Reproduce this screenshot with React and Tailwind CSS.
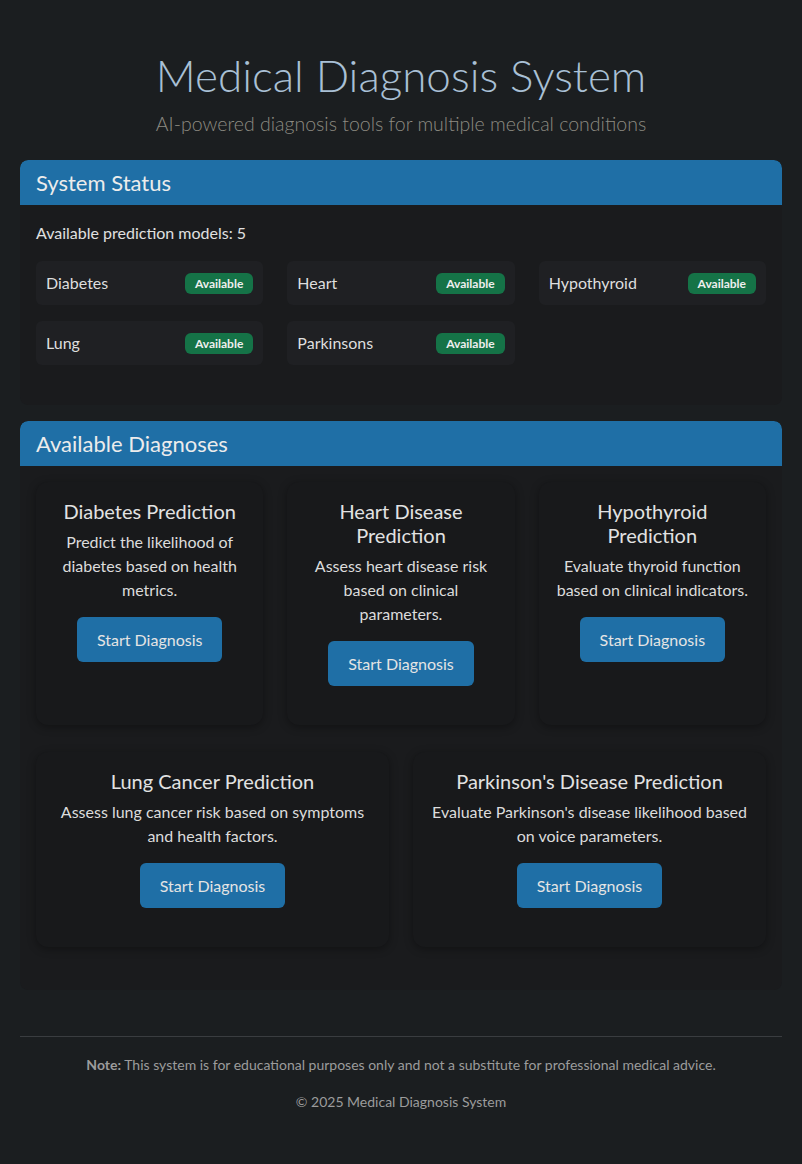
import React from "react";

const models = ["Diabetes", "Heart", "Hypothyroid", "Lung", "Parkinsons"];

const topRow = [
  {
    title: "Diabetes Prediction",
    text: "Predict the likelihood of diabetes based on health metrics.",
  },
  {
    title: "Heart Disease Prediction",
    text: "Assess heart disease risk based on clinical parameters.",
  },
  {
    title: "Hypothyroid Prediction",
    text: "Evaluate thyroid function based on clinical indicators.",
  },
];

const bottomRow = [
  {
    title: "Lung Cancer Prediction",
    text: "Assess lung cancer risk based on symptoms and health factors.",
  },
  {
    title: "Parkinson's Disease Prediction",
    text: "Evaluate Parkinson's disease likelihood based on voice parameters.",
  },
];

const font = { fontFamily: "Lato, 'Noto Sans', sans-serif" };

const DiagnosisCard = ({ title, text }) => (
  <div className="flex flex-col items-center rounded-xl bg-[#18191b] px-4 pt-[17px] pb-[39px] text-center shadow-[0_2px_8px_rgba(0,0,0,0.35)]">
    <h5 className="text-[20px] leading-6 text-[#e2e2e2]">{title}</h5>
    <p className="mt-[7px] text-[16px] leading-6 text-[#dcdcdc]">{text}</p>
    <button className="mt-[15px] rounded-md bg-[#1f6fa6] px-5 py-[10px] text-[16px] leading-[25px] text-[#e4e4e4]">
      Start Diagnosis
    </button>
  </div>
);

const CardHeader = ({ children }) => (
  <div className="flex h-[45px] items-center rounded-t-lg bg-[#1f6fa6] px-4">
    <h4 className="text-[22px] text-[#ececec]">{children}</h4>
  </div>
);

export default function App() {
  return (
    <div className="min-h-[1164px] bg-[#1b1e20] px-5 pt-12 pb-10" style={font}>
      <header className="text-center">
        <h1 className="text-[44px] leading-[54px] font-light text-[#a9c0d5]">Medical Diagnosis System</h1>
        <p className="mt-[7px] text-[19.5px] leading-[30px] font-light text-[#8d8b82]">
          AI-powered diagnosis tools for multiple medical conditions
        </p>
      </header>

      <section className="mt-[21px] overflow-hidden rounded-lg bg-[#1a1b1d]">
        <CardHeader>System Status</CardHeader>
        <div className="px-4 pt-4 pb-10">
          <p className="text-[16px] leading-6 text-[#e0e0e0]">Available prediction models: 5</p>
          <div className="mt-4 grid grid-cols-3 gap-x-6 gap-y-4">
            {models.map((m) => (
              <div key={m} className="flex h-11 items-center justify-between rounded-md bg-[#1f2023] px-[10px]">
                <span className="text-[16px] text-[#dedede]">{m}</span>
                <span className="rounded-md bg-[#157347] px-[10px] py-[3px] text-[12px] leading-[15px] font-bold text-[#eeeeee]">
                  Available
                </span>
              </div>
            ))}
          </div>
        </div>
      </section>

      <section className="mt-4 overflow-hidden rounded-lg bg-[#1a1b1d]">
        <CardHeader>Available Diagnoses</CardHeader>
        <div className="flex flex-col gap-[27px] px-4 pt-4 pb-[43px]">
          <div className="grid grid-cols-3 gap-6">
            {topRow.map((c) => (
              <DiagnosisCard key={c.title} {...c} />
            ))}
          </div>
          <div className="grid grid-cols-2 gap-6">
            {bottomRow.map((c) => (
              <DiagnosisCard key={c.title} {...c} />
            ))}
          </div>
        </div>
      </section>

      <footer className="mt-[46px] border-t border-[#3a3d40] pt-[17px] text-center text-[14px] leading-[21px] text-[#9c9c9c]">
        <p>
          <span className="font-bold">Note:</span> This system is for educational purposes only and not a substitute for
          professional medical advice.
        </p>
        <p className="mt-4">© 2025 Medical Diagnosis System</p>
      </footer>
    </div>
  );
}
